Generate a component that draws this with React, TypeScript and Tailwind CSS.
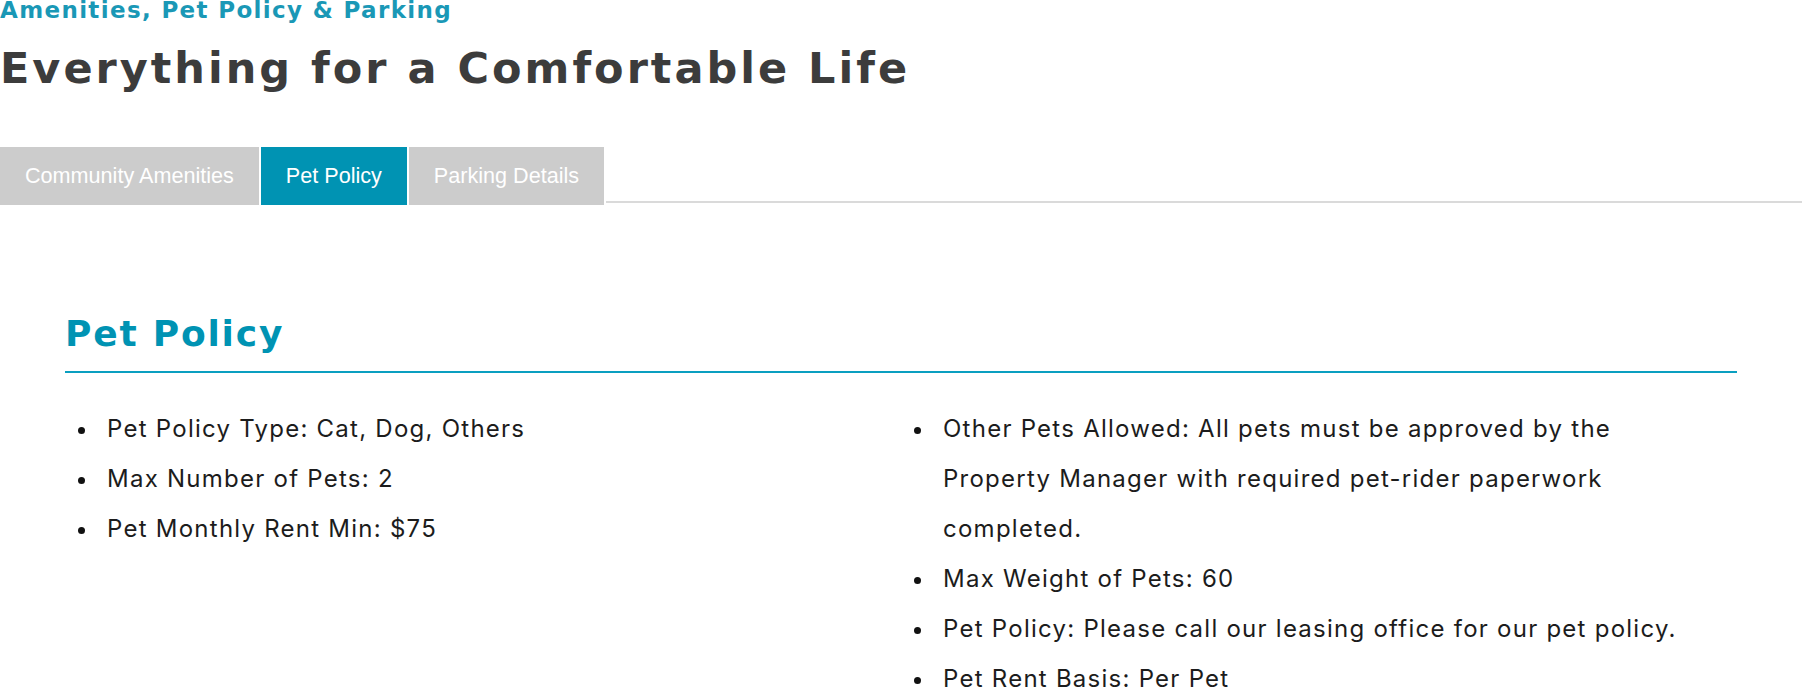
const tabs = [
  { label: "Community Amenities", active: false },
  { label: "Pet Policy", active: true },
  { label: "Parking Details", active: false },
];

const leftItems = [
  "Pet Policy Type: Cat, Dog, Others",
  "Max Number of Pets: 2",
  "Pet Monthly Rent Min: $75",
];

const rightItems = [
  "Other Pets Allowed: All pets must be approved by the Property Manager with required pet-rider paperwork completed.",
  "Max Weight of Pets: 60",
  "Pet Policy: Please call our leasing office for our pet policy.",
  "Pet Rent Basis: Per Pet",
];

function PolicyList({ items }: { items: string[] }) {
  return (
    <ul className="pr-[24px] text-[24px] leading-[50px] tracking-[1.25px] text-[#1c1c1c]">
      {items.map((item) => (
        <li key={item} className="flex">
          <span className="mt-[23px] mr-[22px] ml-[13px] h-[7px] w-[7px] shrink-0 rounded-full bg-[#111]" />
          <span>{item}</span>
        </li>
      ))}
    </ul>
  );
}

export default function App() {
  return (
    <div className="h-[688px] w-[1802px] overflow-hidden bg-white font-['Inter',sans-serif]">
      <p className="font-['DejaVu_Sans',sans-serif] text-[23px] font-bold leading-[20px] tracking-[1.35px] text-[#1a98b6]">
        Amenities, Pet Policy &amp; Parking
      </p>
      <h1 className="mt-[22px] font-['DejaVu_Sans',sans-serif] text-[43px] font-bold leading-[52px] tracking-[3px] text-[#3c3c3c]">
        Everything for a Comfortable Life
      </h1>

      {/* tab strip */}
      <div className="mt-[53px] flex">
        {tabs.map((tab) => (
          <div
            key={tab.label}
            className={`mr-[2px] flex h-[58px] items-center px-[25px] font-['Liberation_Sans',Arial,sans-serif] text-[21.6px] text-white ${
              tab.active ? "bg-[#0093b3]" : "bg-[#cccccc]"
            }`}
          >
            {tab.label}
          </div>
        ))}
        <div className="mb-[2px] flex-1 border-b-2 border-[#dadada]" />
      </div>

      <section className="mx-[65px] mt-[107px]">
        <h2 className="border-b-2 border-[#0a9fc0] pb-[15px] font-['DejaVu_Sans',sans-serif] text-[36px] font-bold leading-[44px] tracking-[1.8px] text-[#0093b3]">
          Pet Policy
        </h2>
        <div className="grid grid-cols-2 pt-[31px]">
          <PolicyList items={leftItems} />
          <PolicyList items={rightItems} />
        </div>
      </section>
    </div>
  );
}
